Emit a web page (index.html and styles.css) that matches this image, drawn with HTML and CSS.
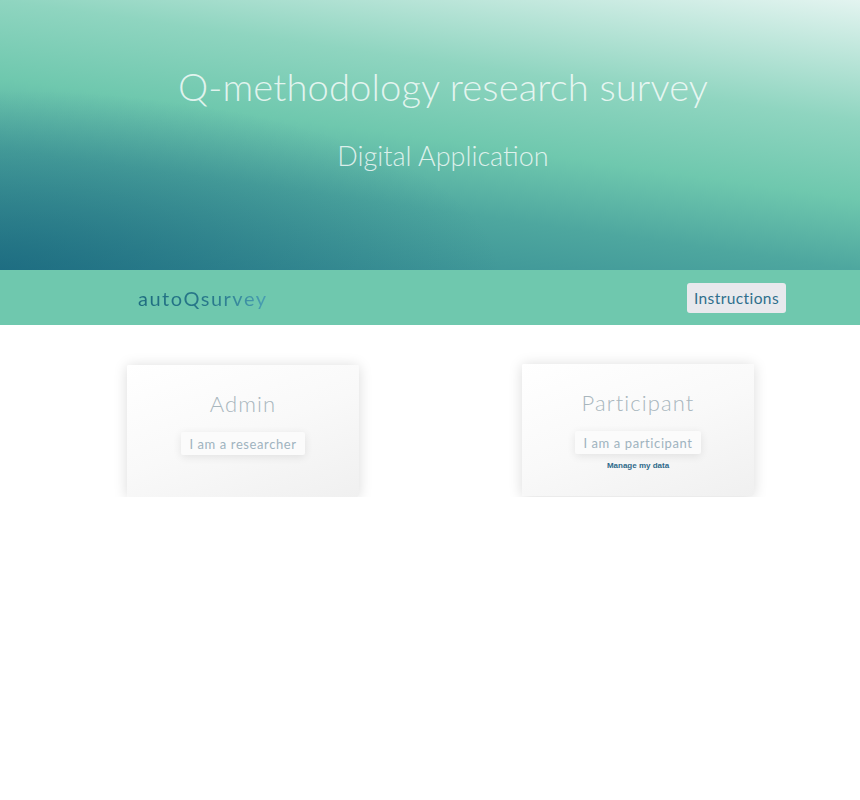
FILE: index.html
```html
<!DOCTYPE html>
<html>
<head>
<meta charset="utf-8">
<link rel="stylesheet" href="styles.css">
</head>
<body>
<header class="hero">
  <h1 class="hero-title">Q-methodology research survey</h1>
  <p class="hero-sub">Digital Application</p>
</header>
<nav class="nav">
  <span class="logo">autoQsurvey</span>
  <button class="nav-btn">Instructions</button>
</nav>
<main class="cards">
  <section class="card">
    <h2 class="card-title">Admin</h2>
    <button class="card-btn">I am a researcher</button>
  </section>
  <section class="card">
    <h2 class="card-title">Participant</h2>
    <button class="card-btn">I am a participant</button>
    <a class="manage">Manage my data</a>
  </section>
</main>
</body>
</html>
```
FILE: styles.css
```css
* { box-sizing: border-box; }
html, body { margin: 0; padding: 0; background: #fff; }
body { font-family: Lato, "Noto Sans", sans-serif; width: 860px; }

.hero {
  height: 270px;
  background:
    radial-gradient(500px 180px at 0 100%, rgba(16,90,118,0.55), rgba(16,90,118,0)),
    linear-gradient(8deg, #2f8590 0%, #4ea79f 31%, #6fc8ae 49%, #8fd5c0 69%, #e3f4f0 100%);
  display: flex;
  flex-direction: column;
  align-items: center;
  padding: 61px 0 0 26px;
}
.hero-title {
  margin: 0;
  font-weight: 300;
  font-size: 38.2px;
  line-height: 50px;
  color: rgba(255,255,255,0.78);
  letter-spacing: 0.1px;
}
.hero-sub {
  margin: 27px 0 0;
  font-weight: 300;
  font-size: 27px;
  line-height: 36px;
  color: rgba(255,255,255,0.78);
}

.nav {
  height: 55px;
  background: #6fc8ae;
  display: flex;
  align-items: center;
  justify-content: space-between;
  padding: 0 74px 0 138px;
}
.logo {
  font-size: 20px;
  letter-spacing: 1.5px;
  background: linear-gradient(90deg, #1e6c80 0%, #2a7a8c 60%, #4aa0b4 100%);
  -webkit-background-clip: text;
  background-clip: text;
  color: transparent;
  margin-top: 1px;
}
.nav-btn {
  font-family: inherit;
  font-size: 15.5px;
  color: #2f6f8c;
  background: #e8e9ed;
  border: none;
  border-radius: 3px;
  height: 30px;
  padding: 0 7px;
  letter-spacing: 0.4px;
  margin-top: 1px;
}

.cards {
  display: flex;
  gap: 163px;
  padding: 40px 0 0 127px;
}
.card {
  width: 232px;
  height: 132px;
  background: linear-gradient(160deg, #ffffff 0%, #f9f9f9 50%, #f0f0f0 100%);
  box-shadow: 0 1px 14px rgba(0,0,0,0.15);
  border-radius: 2px;
  display: flex;
  flex-direction: column;
  align-items: center;
  padding-top: 25px;
}
.card + .card { margin-top: -1px; }
.card-title {
  margin: 0;
  font-weight: 300;
  font-size: 22px;
  line-height: 28px;
  color: #a8b6bd;
  letter-spacing: 1.1px;
}
.card-btn {
  margin-top: 14px;
  font-family: inherit;
  font-size: 13px;
  color: #9fb3bf;
  background: #fbfbfb;
  border: none;
  border-radius: 2px;
  height: 23px;
  padding: 0 8px;
  box-shadow: 0 2px 8px rgba(0,0,0,0.09);
  letter-spacing: 0.6px;
}
.manage {
  margin-top: 7px;
  font-family: "Liberation Sans", Arial, sans-serif;
  font-weight: bold;
  font-size: 8px;
  color: #2e6a8a;
}
```
